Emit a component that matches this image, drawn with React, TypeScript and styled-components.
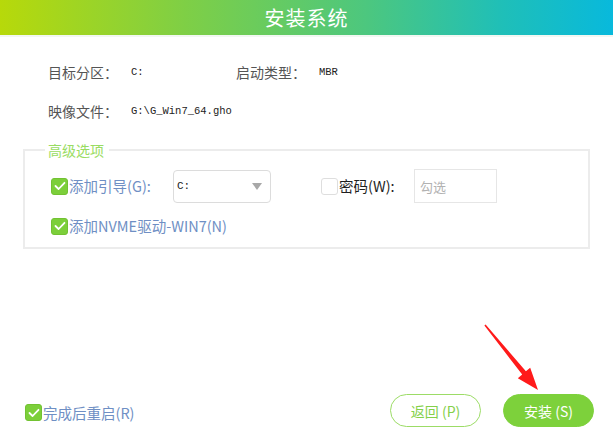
import React from "react";
import styled, { createGlobalStyle } from "styled-components";

const Global = createGlobalStyle`
  html, body { margin: 0; padding: 0; background: #fff; }
  body { font-family: "Noto Sans CJK SC", "Noto Sans", sans-serif; }
  * { box-sizing: border-box; }
`;

const Page = styled.div`
  position: relative;
  width: 613px;
  height: 443px;
  display: flex;
  flex-direction: column;
  background: #fff;
  overflow: hidden;
`;

const Header = styled.div`
  height: 37px;
  flex: none;
  display: flex;
  align-items: center;
  justify-content: center;
  background: linear-gradient(90deg, #b7d90a 0%, #7fcf45 30%, #4cc77f 60%, #1fbfb8 82%, #08b9dc 100%);
  color: #fff;
  font-size: 20px;
  letter-spacing: 1px;
  border-bottom: 2px solid #f2f7f2;
`;

const Info = styled.div`
  display: grid;
  grid-template-columns: 83px 105px 83px auto;
  grid-auto-rows: 20px;
  row-gap: 19px;
  align-items: center;
  padding: 25px 0 0 48px;
`;

const InfoLabel = styled.span`
  font-size: 14px;
  color: #555;
  white-space: nowrap;
`;

const InfoValue = styled.span<{ $span?: number }>`
  font-family: "Liberation Mono", "DejaVu Sans Mono", monospace;
  font-size: 10.5px;
  color: #222;
  grid-column: span ${(p) => p.$span ?? 1};
`;

const Group = styled.fieldset`
  margin: 19px 23px 0;
  padding: 0 0 11px 0;
  border: 2px solid #ececec;
  min-width: 0;
`;

const Legend = styled.legend`
  margin-left: 20px;
  padding: 0 5px 0 3px;
  font-size: 14px;
  line-height: 20px;
  color: #99dc62;
`;

const Options = styled.div`
  display: flex;
  flex-direction: column;
  padding-left: 26px;
`;

const OptRow = styled.div<{ $top: number }>`
  display: flex;
  align-items: center;
  margin-top: ${(p) => p.$top}px;
  min-height: 20px;
`;

const CheckGroup = styled.label<{ $width?: number }>`
  display: flex;
  align-items: center;
  gap: 1px;
  width: ${(p) => (p.$width ? `${p.$width}px` : "auto")};
  flex: none;
`;

const Box = styled.span<{ $on: boolean }>`
  width: 17px;
  height: 17px;
  flex: none;
  border-radius: 3px;
  display: flex;
  align-items: center;
  justify-content: center;
  background: ${(p) => (p.$on ? "#7ccf3a" : "#fff")};
  border: 1px solid ${(p) => (p.$on ? "#72c232" : "#dedede")};
`;

const OptText = styled.span<{ $dark?: boolean }>`
  font-size: 14.5px;
  color: ${(p) => (p.$dark ? "#1f1f1f" : "#6f8fc4")};
  white-space: nowrap;
  line-height: 20px;
`;

const Select = styled.div`
  width: 98px;
  height: 33px;
  flex: none;
  border: 1px solid #dcdcdc;
  border-radius: 4px;
  display: flex;
  align-items: center;
  justify-content: space-between;
  padding: 0 8px 0 3px;
  font-family: "Liberation Mono", "DejaVu Sans Mono", monospace;
  font-size: 11px;
  color: #222;
`;

const Caret = styled.span`
  width: 0;
  height: 0;
  border-left: 5px solid transparent;
  border-right: 5px solid transparent;
  border-top: 7px solid #a8a8a8;
`;

const PwGroup = styled(CheckGroup)`
  margin-left: 50px;
`;

const TextInput = styled.div`
  width: 83px;
  height: 34px;
  flex: none;
  border: 1px solid #e6e6e6;
  display: flex;
  align-items: center;
  padding-left: 5px;
  font-size: 13px;
  color: #b2b2b2;
`;

const Spacer = styled.div`
  flex: 1;
`;

const Footer = styled.div`
  display: flex;
  align-items: center;
  padding: 0 19px 16px 25px;
`;

const FooterCheck = styled(CheckGroup)`
  margin-top: 4px;
`;

const Buttons = styled.div`
  margin-left: auto;
  display: flex;
  gap: 22px;
`;

const Btn = styled.button<{ $primary?: boolean }>`
  width: 91px;
  height: 33px;
  border-radius: 17px;
  font-family: "Noto Sans CJK SC", "Noto Sans", sans-serif;
  font-size: 14px;
  cursor: pointer;
  border: 1.5px solid ${(p) => (p.$primary ? "#7dd13b" : "#9cdc66")};
  background: ${(p) => (p.$primary ? "#7dd13b" : "#fff")};
  color: ${(p) => (p.$primary ? "#fff" : "#84d04a")};
  padding: 0;
`;

const Arrow = styled.svg`
  position: absolute;
  left: 480px;
  top: 320px;
  pointer-events: none;
`;

const Check = () => (
  <svg width="12" height="10" viewBox="0 0 12 10">
    <path d="M1.5 5 L4.6 8 L10.5 1.8" fill="none" stroke="#fff" strokeWidth="1.8" strokeLinecap="round" strokeLinejoin="round" />
  </svg>
);

const CheckBox = ({ on }: { on: boolean }) => <Box $on={on}>{on && <Check />}</Box>;

export default function App() {
  return (
    <Page>
      <Global />
      <Header>安装系统</Header>
      <Info>
        <InfoLabel>目标分区：</InfoLabel>
        <InfoValue>C:</InfoValue>
        <InfoLabel>启动类型：</InfoLabel>
        <InfoValue>MBR</InfoValue>
        <InfoLabel>映像文件：</InfoLabel>
        <InfoValue $span={3}>G:\G_Win7_64.gho</InfoValue>
      </Info>
      <Group>
        <Legend>高级选项</Legend>
        <Options>
          <OptRow $top={9}>
            <CheckGroup $width={122}>
              <CheckBox on />
              <OptText>添加引导(G):</OptText>
            </CheckGroup>
            <Select>
              <span>C:</span>
              <Caret />
            </Select>
            <PwGroup $width={93}>
              <CheckBox on={false} />
              <OptText $dark>密码(W):</OptText>
            </PwGroup>
            <TextInput>勾选</TextInput>
          </OptRow>
          <OptRow $top={13}>
            <CheckGroup>
              <CheckBox on />
              <OptText>添加NVME驱动-WIN7(N)</OptText>
            </CheckGroup>
          </OptRow>
        </Options>
      </Group>
      <Spacer />
      <Footer>
        <FooterCheck>
          <CheckBox on />
          <OptText>完成后重启(R)</OptText>
        </FooterCheck>
        <Buttons>
          <Btn>返回 (P)</Btn>
          <Btn $primary>安装 (S)</Btn>
        </Buttons>
      </Footer>
      <Arrow width="66" height="76" viewBox="0 0 66 76">
        <polygon
          points="4.4,5.6 5.6,4.4 45.9,51.2 50.2,47.7 58,70 37.8,58.2 42.2,54.6"
          fill="#ff1a1a"
        />
      </Arrow>
    </Page>
  );
}
